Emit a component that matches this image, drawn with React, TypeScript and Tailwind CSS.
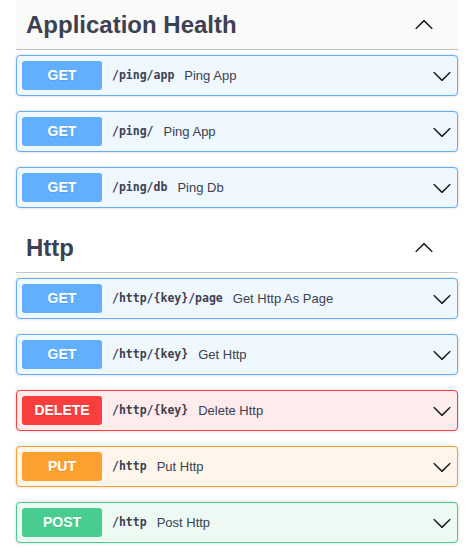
import React from "react";

type Op = { method: "GET" | "DELETE" | "PUT" | "POST"; path: string; desc: string };

const styles: Record<Op["method"], { box: string; btn: string }> = {
  GET: { box: "border-[#61affe] bg-[#eff7ff]", btn: "bg-[#61affe]" },
  DELETE: { box: "border-[#f93e3e] bg-[#feebeb]", btn: "bg-[#f93e3e]" },
  PUT: { box: "border-[#fca130] bg-[#fff5ea]", btn: "bg-[#fca130]" },
  POST: { box: "border-[#49cc90] bg-[#edfaf4]", btn: "bg-[#49cc90]" },
};

function Arrow({ up = false }: { up?: boolean }) {
  return (
    <svg
      width="20"
      height="20"
      viewBox="0 0 20 20"
      className={up ? "rotate-180 shrink-0" : "shrink-0"}
      fill="#1b1b1b"
    >
      <path d="M17.418 6.109c.272-.268.709-.268.979 0s.271.701 0 .969l-7.908 7.83c-.27.268-.707.268-.979 0l-7.908-7.83c-.27-.268-.27-.701 0-.969.271-.268.709-.268.979 0L10 13.25l7.418-7.141z" />
    </svg>
  );
}

function Operation({ op }: { op: Op }) {
  const s = styles[op.method];
  return (
    <div
      className={`mb-[15px] flex items-center rounded-[4px] border p-[5px] shadow-[0_0_3px_rgba(0,0,0,0.19)] ${s.box}`}
    >
      <div
        className={`flex h-[29px] w-[80px] shrink-0 items-center justify-center rounded-[3px] text-[14px] font-bold text-white [text-shadow:0_1px_0_rgba(0,0,0,0.1)] ${s.btn}`}
        style={{ fontFamily: '"Liberation Sans", Arial, sans-serif' }}
      >
        {op.method}
      </div>
      <span
        className="px-[10px] text-[11.5px] font-semibold text-[#3b4151]"
        style={{ fontFamily: '"DejaVu Sans Mono", monospace' }}
      >
        {op.path}
      </span>
      <span
        className="flex-1 text-[13px] text-[#3b4151]"
        style={{ fontFamily: '"Liberation Sans", Arial, sans-serif' }}
      >
        {op.desc}
      </span>
      <Arrow />
    </div>
  );
}

function Section({ title, ops, hover }: { title: string; ops: Op[]; hover?: boolean }) {
  return (
    <div>
      <div
        className={`mb-[5px] flex h-[50px] items-center border-b border-[rgba(59,65,81,0.3)] pl-[10px] pr-[24px] ${
          hover ? "bg-[#fafafa]" : ""
        }`}
      >
        <h3
          className="flex-1 text-[24px] font-bold text-[#3b4151]"
          style={{ fontFamily: '"Liberation Sans", Arial, sans-serif' }}
        >
          {title}
        </h3>
        <Arrow up />
      </div>
      {ops.map((op, i) => (
        <Operation key={i} op={op} />
      ))}
    </div>
  );
}

export default function App() {
  const health: Op[] = [
    { method: "GET", path: "/ping/app", desc: "Ping App" },
    { method: "GET", path: "/ping/", desc: "Ping App" },
    { method: "GET", path: "/ping/db", desc: "Ping Db" },
  ];
  const http: Op[] = [
    { method: "GET", path: "/http/{key}/page", desc: "Get Http As Page" },
    { method: "GET", path: "/http/{key}", desc: "Get Http" },
    { method: "DELETE", path: "/http/{key}", desc: "Delete Http" },
    { method: "PUT", path: "/http", desc: "Put Http" },
    { method: "POST", path: "/http", desc: "Post Http" },
  ];
  return (
    <div className="min-h-[553px] bg-white pl-[16px] pr-[15px]">
      <Section title="Application Health" ops={health} hover />
      <Section title="Http" ops={http} />
    </div>
  );
}
